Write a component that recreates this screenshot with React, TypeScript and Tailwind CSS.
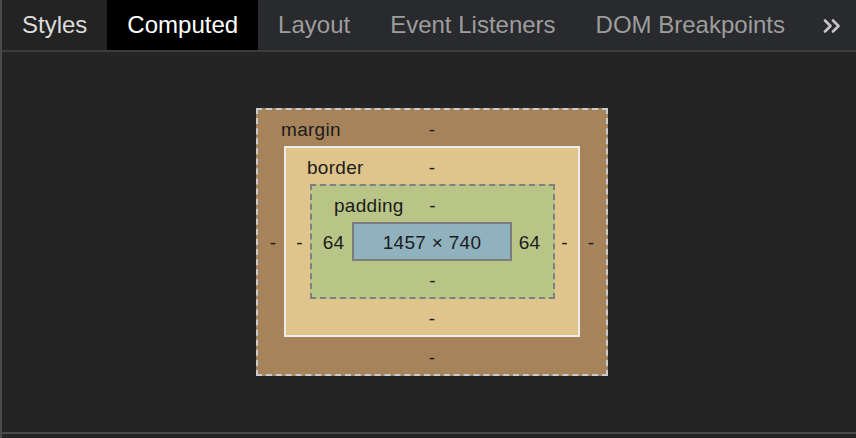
import React from 'react';

const tabs = [
  { label: 'Styles', state: 'dim' },
  { label: 'Computed', state: 'active' },
  { label: 'Layout', state: 'idle' },
  { label: 'Event Listeners', state: 'idle' },
  { label: 'DOM Breakpoints', state: 'idle' },
];

function ChevronsRight() {
  return (
    <svg width="18" height="14" viewBox="0 0 18 14" fill="none" stroke="#c4c4c4" strokeWidth="2.6" strokeLinecap="round" strokeLinejoin="round">
      <path d="M2 1.5 L7.5 7 L2 12.5" />
      <path d="M10 1.5 L15.5 7 L10 12.5" />
    </svg>
  );
}

// one labelled row at the top of a box: name on the left, value in the middle
function TopRow({ label, value, height, pad }: { label: string; value: string; height: string; pad: string }) {
  return (
    <div className={`grid grid-cols-[1fr_auto_1fr] items-center pt-[3px] ${height}`}>
      <span className={`justify-self-start ${pad}`}>{label}</span>
      <span>{value}</span>
      <span />
    </div>
  );
}

export default function App() {
  return (
    <div
      className="w-[856px] h-[438px] flex flex-col bg-[#242424] border-l-2 border-[#4a4a4a] overflow-hidden"
      style={{ fontFamily: '"Liberation Sans", Arial, sans-serif' }}
    >
      {/* Tab strip */}
      <div className="h-[52px] shrink-0 flex items-stretch bg-[#292a2d] border-b-2 border-[#3c3c3c] text-[24px]">
        {tabs.map(t => (
          <div
            key={t.label}
            className={
              t.state === 'active'
                ? 'flex items-center px-[20px] bg-black text-white'
                : t.state === 'dim'
                ? 'flex items-center px-[20px] bg-[#232323] text-[#dcdcdc]'
                : 'flex items-center px-[20px] text-[#9d9d9d]'
            }
          >
            {t.label}
          </div>
        ))}
        <div className="flex items-center pl-[18px] pt-[2px]">
          <ChevronsRight />
        </div>
      </div>

      {/* Box model */}
      <div className="h-[380px] shrink-0 flex justify-center items-start pl-[6px] pt-[56px] text-[19px] tracking-[0.3px] text-[#1c1c1c] leading-none">
        {/* margin */}
        <div className="w-[352px] h-[268px] flex flex-col bg-[#a6835a] border-2 border-dashed border-[#c6ccd3]">
          <TopRow label="margin" value="-" height="h-[36px]" pad="pl-[23px]" />
          <div className="flex items-center">
            <div className="w-[26px] text-center pl-[4px] pt-[2px]">-</div>
            {/* border */}
            <div className="w-[296px] h-[191px] flex flex-col bg-[#dfc48b] border-2 border-[#ececec]">
              <TopRow label="border" value="-" height="h-[36px]" pad="pl-[21px]" />
              <div className="flex items-center">
                <div className="w-[24px] text-center pl-[3px] pt-[2px]">-</div>
                {/* padding */}
                <div className="w-[245px] h-[115px] flex flex-col bg-[#b9c487] border-2 border-dashed border-[#808080]">
                  <TopRow label="padding" value="-" height="h-[36px]" pad="pl-[22px]" />
                  <div className="flex items-center">
                    <div className="w-[40px] text-center pl-[3px] pt-[2px]">64</div>
                    {/* content */}
                    <div className="w-[160px] h-[39px] flex items-center justify-center pt-[2px] bg-[#8fb2be] border-2 border-[#7d7d7d]">
                      1457 × 740
                    </div>
                    <div className="w-[41px] text-center pr-[6px] pt-[2px]">64</div>
                  </div>
                  <div className="flex-1 flex items-center justify-center pt-[3px]">-</div>
                </div>
                <div className="w-[23px] text-center pr-[4px] pt-[2px]">-</div>
              </div>
              <div className="flex-1 flex items-center justify-center pt-[3px]">-</div>
            </div>
            <div className="w-[26px] text-center pr-[4px] pt-[2px]">-</div>
          </div>
          <div className="flex-1 flex items-center justify-center pt-[3px]">-</div>
        </div>
      </div>

      <div className="flex-1 border-t-2 border-[#4a4a4a]" />
    </div>
  );
}
